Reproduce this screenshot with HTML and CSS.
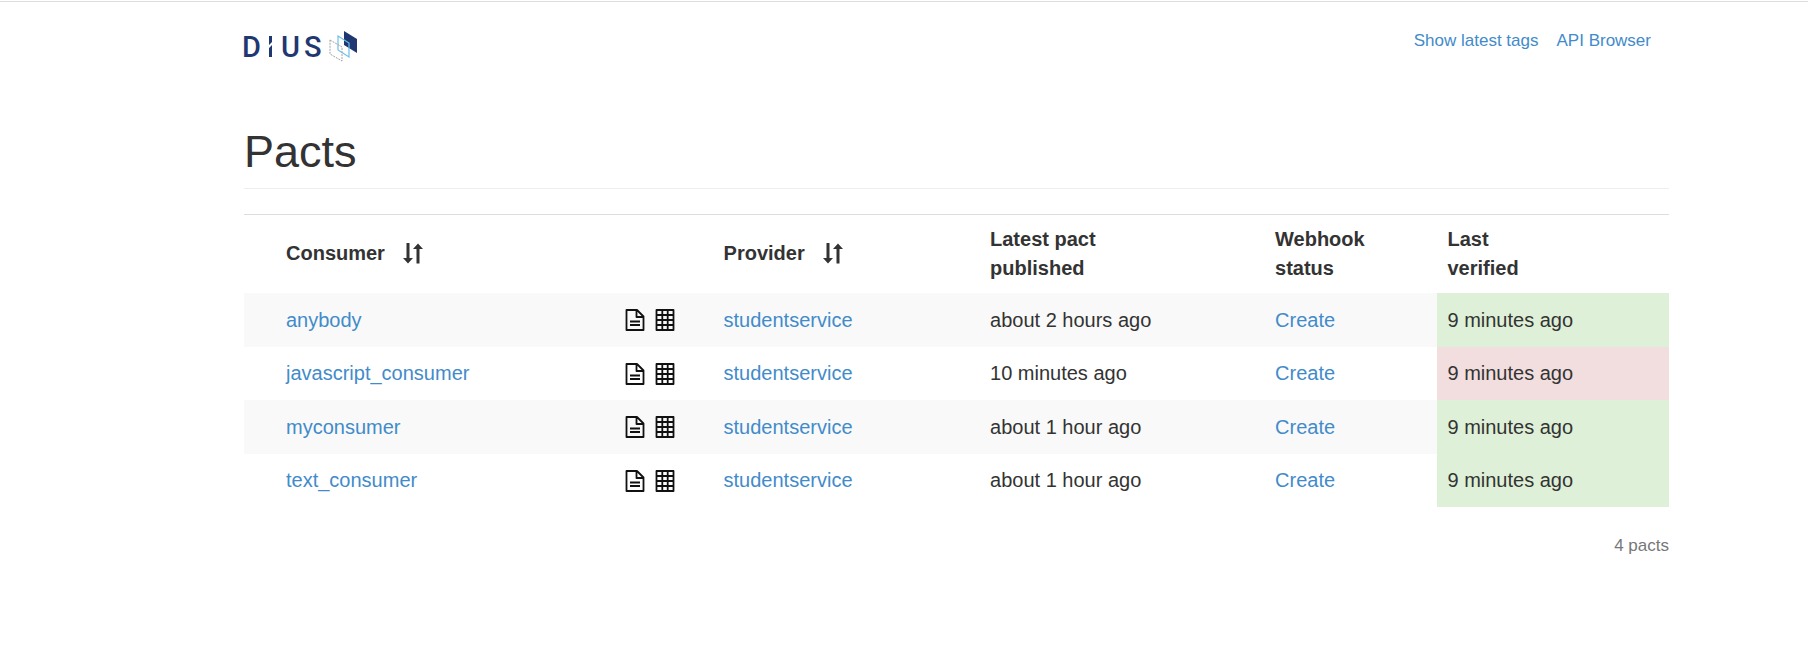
FILE: index.html
```html
<!DOCTYPE html>
<html lang="en">
<head>
<meta charset="utf-8">
<title>Pacts</title>
<link rel="stylesheet" href="styles.css">
</head>
<body>
<svg class="sprite" aria-hidden="true">
  <symbol id="sort" viewBox="0 0 20 21">
    <path d="M3.500 0h3v15h3.500l-5 5.500-5-5.500h3.500zM13.500 20.500V6H10l5-5.500L20 6h-3.500v14.500z"/>
  </symbol>
  <symbol id="doc" viewBox="0 0 20 22">
    <path d="M1.500 1h10.500l6.500 6.500V21h-17zM11.500 1v7H18.500M5 12.500h10M5 16h10" fill="none" stroke="currentColor" stroke-width="1.800" stroke-linejoin="round"/>
  </symbol>
  <symbol id="grid" viewBox="0 0 20 22">
    <path d="M1.500 1h17v20h-17zM7.300 1v20M12.700 1v20M1.500 6h17M1.500 11h17M1.500 16h17" fill="none" stroke="currentColor" stroke-width="1.800" stroke-linejoin="round"/>
  </symbol>
</svg>
<div class="page">
  <header class="topbar">
    <a class="logo" href="#" aria-label="DiUS">
      <svg width="118" height="34" viewBox="-4 0 118 34">
        <g class="logo-text">
          <text x="-2" y="27">D</text>
          <text x="37" y="27">U</text>
          <text x="60" y="27">S</text>
        </g>
        <path d="M25 6h3v6l-3 3zM25 18l3-3v12h-3z" fill="#1f3871"/>
        <path d="M100 1l13 8v14l-13-8z" fill="#1f3871"/>
        <path d="M94 6l11 7v14l-11-7z" fill="none" stroke="#6ebfeb" stroke-width="1.200"/>
        <path d="M86 10l12 7v14l-12-7z" fill="none" stroke="#a3a3a3" stroke-dasharray="2 1"/>
      </svg>
    </a>
    <nav class="links">
      <a href="#">Show latest tags</a>
      <a href="#">API Browser</a>
    </nav>
  </header>
  <main>
    <h1>Pacts</h1>
    <table class="pacts">
      <colgroup>
        <col class="c-pad"><col class="c-consumer"><col class="c-doc"><col class="c-grid"><col class="c-provider"><col class="c-published"><col class="c-webhook"><col class="c-verified">
      </colgroup>
      <thead>
        <tr>
          <th></th>
          <th><span class="sortable">Consumer <button type="button" aria-label="Sort by consumer"><svg width="20" height="21"><use href="#sort"/></svg></button></span></th>
          <th></th>
          <th></th>
          <th><span class="sortable">Provider <button type="button" aria-label="Sort by provider"><svg width="20" height="21"><use href="#sort"/></svg></button></span></th>
          <th>Latest pact<br>published</th>
          <th>Webhook<br>status</th>
          <th>Last<br>verified</th>
        </tr>
      </thead>
      <tbody>
        <tr>
          <td></td><td><a href="#">anybody</a></td>
          <td class="icon"><a href="#" aria-label="View pact"><svg width="20" height="22"><use href="#doc"/></svg></a></td>
          <td class="icon"><a href="#" aria-label="View matrix"><svg width="20" height="22"><use href="#grid"/></svg></a></td>
          <td><a href="#">studentservice</a></td><td>about 2 hours ago</td><td><a href="#">Create</a></td><td class="success">9 minutes ago</td>
        </tr>
        <tr>
          <td></td><td><a href="#">javascript_consumer</a></td>
          <td class="icon"><a href="#" aria-label="View pact"><svg width="20" height="22"><use href="#doc"/></svg></a></td>
          <td class="icon"><a href="#" aria-label="View matrix"><svg width="20" height="22"><use href="#grid"/></svg></a></td>
          <td><a href="#">studentservice</a></td><td>10 minutes ago</td><td><a href="#">Create</a></td><td class="danger">9 minutes ago</td>
        </tr>
        <tr>
          <td></td><td><a href="#">myconsumer</a></td>
          <td class="icon"><a href="#" aria-label="View pact"><svg width="20" height="22"><use href="#doc"/></svg></a></td>
          <td class="icon"><a href="#" aria-label="View matrix"><svg width="20" height="22"><use href="#grid"/></svg></a></td>
          <td><a href="#">studentservice</a></td><td>about 1 hour ago</td><td><a href="#">Create</a></td><td class="success">9 minutes ago</td>
        </tr>
        <tr>
          <td></td><td><a href="#">text_consumer</a></td>
          <td class="icon"><a href="#" aria-label="View pact"><svg width="20" height="22"><use href="#doc"/></svg></a></td>
          <td class="icon"><a href="#" aria-label="View matrix"><svg width="20" height="22"><use href="#grid"/></svg></a></td>
          <td><a href="#">studentservice</a></td><td>about 1 hour ago</td><td><a href="#">Create</a></td><td class="success">9 minutes ago</td>
        </tr>
      </tbody>
    </table>
    <p class="count">4 pacts</p>
  </main>
</div>
</body>
</html>
```

FILE: styles.css
```css
* {
  box-sizing: border-box;
}

body {
  margin: 0;
  padding-top: 1px;
  background: #fff;
  color: #333;
  font: 20px/29px "Liberation Sans", Arial, sans-serif;
}

a {
  color: #428bca;
  text-decoration: none;
}

.sprite {
  display: none;
}

.page {
  padding: 0 139px 0 244px;
  border-top: 1px solid #ddd;
}

.topbar {
  display: flex;
  justify-content: space-between;
  align-items: flex-start;
  padding-top: 24px;
}

.logo {
  display: block;
  margin-left: -4px;
  padding-top: 4px;
}

.logo svg {
  display: block;
}

.logo-text {
  fill: #1f3871;
  font: 500 29px Roboto, sans-serif;
}

.links {
  display: flex;
  gap: 18px;
  padding-right: 18px;
  font-size: 17px;
}

h1 {
  margin: 63px 0 25px;
  padding-bottom: 11px;
  border-bottom: 1px solid #eee;
  font-size: 45px;
  font-weight: 400;
  line-height: 50px;
}

.pacts {
  width: 100%;
  border-collapse: collapse;
  border-top: 1px solid #ddd;
  table-layout: fixed;
}

.c-pad { width: 32px; }
.c-consumer { width: 23.9%; }
.c-doc { width: 30px; }
.c-grid { width: 67px; }
.c-provider { width: 18.7%; }
.c-published { width: 20%; }
.c-webhook { width: 12.1%; }

th,
td {
  padding: 10px;
  text-align: left;
  vertical-align: middle;
}

td {
  height: 54px;
}

tbody tr:nth-child(even) td {
  height: 53px;
}

tbody tr:nth-child(odd) {
  background: #f9f9f9;
}

.sortable {
  display: flex;
  align-items: center;
  gap: 18px;
  padding-bottom: 2px;
}

.sortable button {
  padding: 0;
  border: 0;
  background: none;
  color: #333;
}

.sortable svg {
  display: block;
  fill: currentColor;
}

.icon {
  padding: 0 0 0 8px;
}

.icon a {
  color: #111;
}

.icon svg {
  display: block;
}

.pacts .success {
  background: #dff0d8;
}

.pacts .danger {
  background: #f2dede;
}

.count {
  margin: 24px 0;
  color: #777;
  font-size: 17px;
  text-align: right;
}
```
